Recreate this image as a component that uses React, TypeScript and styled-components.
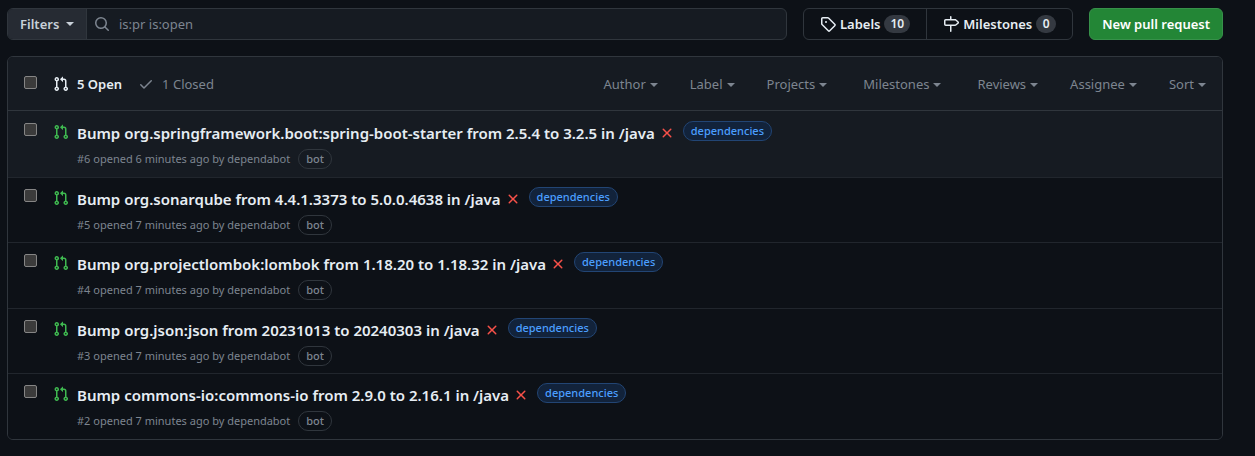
import React from "react";
import styled, { createGlobalStyle } from "styled-components";

const color = {
  canvas: "#0d1117",
  subtle: "#161b22",
  border: "#30363d",
  rowBorder: "#21262d",
  text: "#e6edf3",
  muted: "#7d8590",
  open: "#3fb950",
  danger: "#f85149",
};

const GlobalStyle = createGlobalStyle`
  *, *::before, *::after { box-sizing: border-box; }
  body {
    margin: 0;
    background: ${color.canvas};
    color: ${color.text};
    font-family: "Noto Sans", "Open Sans", sans-serif;
    font-size: 13px;
    line-height: 20px;
  }
  button, input { font: inherit; color: inherit; }
  a { color: inherit; text-decoration: none; }
`;

const Page = styled.main`
  padding: 8px 32px 16px 7px;
`;

const Toolbar = styled.div`
  display: flex;
  gap: 16px;
  margin-bottom: 16px;
`;

const SearchGroup = styled.form`
  display: flex;
  flex: 1;
  min-width: 0;
  height: 32px;
  border: 1px solid ${color.border};
  border-radius: 6px;
  background: ${color.subtle};
  overflow: hidden;
`;

const FilterButton = styled.button`
  display: flex;
  align-items: center;
  justify-content: space-between;
  width: 79px;
  padding: 0 12px;
  border: 0;
  border-right: 1px solid ${color.border};
  background: #262b33;
  color: #c9d1d9;
  font-weight: 600;
`;

const SearchField = styled.label`
  display: flex;
  flex: 1;
  align-items: center;
  gap: 9px;
  padding-left: 7px;
  color: ${color.muted};
`;

const SearchInput = styled.input`
  flex: 1;
  min-width: 0;
  padding: 0;
  border: 0;
  outline: 0;
  background: transparent;
`;

const Caret = styled.span`
  width: 0;
  height: 0;
  border: 4px solid transparent;
  border-top-color: currentColor;
  border-bottom-width: 0;
`;

const LinkGroup = styled.nav`
  display: flex;
  height: 32px;
  border: 1px solid ${color.border};
  border-radius: 6px;
`;

const GroupLink = styled.a`
  display: flex;
  align-items: center;
  gap: 4px;
  padding: 0 16px;
  font-weight: 600;

  & + & { border-left: 1px solid ${color.border}; }
`;

const Counter = styled.span`
  min-width: 20px;
  padding: 0 6px;
  border-radius: 10px;
  background: #343941;
  font-size: 12px;
  line-height: 18px;
  text-align: center;
`;

const PrimaryButton = styled.button`
  height: 32px;
  padding: 0 12px;
  border: 1px solid #37914a;
  border-radius: 6px;
  background: #238636;
  color: #fff;
  font-weight: 600;
  white-space: nowrap;
`;

const Panel = styled.section`
  border: 1px solid ${color.border};
  border-radius: 6px;
  overflow: hidden;
`;

const PanelHeader = styled.header`
  display: flex;
  align-items: center;
  height: 54px;
  padding: 0 16px;
  border-bottom: 1px solid ${color.border};
  background: ${color.subtle};
`;

const Checkbox = styled.input`
  appearance: none;
  flex: none;
  width: 13px;
  height: 13px;
  margin: 0 16px 2px 0;
  border: 1px solid #858585;
  border-radius: 2px;
  background: #3b3b3b;
`;

const StateLink = styled.a<{ $active?: boolean }>`
  display: flex;
  align-items: center;
  gap: 8px;
  margin-right: 16px;
  color: ${(p) => (p.$active ? color.text : color.muted)};
  font-weight: ${(p) => (p.$active ? 600 : 400)};
`;

const MenuBar = styled.div`
  display: flex;
  gap: 32px;
  margin-left: auto;
`;

const MenuButton = styled.button<{ $spaced?: boolean }>`
  display: flex;
  align-items: center;
  gap: 4px;
  margin: 0 ${(p) => (p.$spaced ? 4 : 0)}px;
  padding: 0;
  border: 0;
  background: none;
  color: ${color.muted};

  ${Caret} { margin-top: 3px; }
`;

const List = styled.ul`
  display: grid;
  grid-auto-rows: 1fr;
  min-height: 328px;
  margin: 0;
  padding: 0;
  list-style: none;
`;

const Row = styled.li<{ $highlighted?: boolean }>`
  display: flex;
  align-items: flex-start;
  padding: 11px 16px 0;
  border-top: 1px solid ${color.rowBorder};
  background: ${(p) => (p.$highlighted ? color.subtle : color.canvas)};

  &:first-child { border-top-color: transparent; }
`;

const StateIcon = styled.span`
  display: flex;
  padding-top: 1px;
`;

const RowBody = styled.div`
  margin-left: 8px;
`;

const TitleLine = styled.div`
  display: flex;
  align-items: center;
`;

const Title = styled.a`
  margin-right: 4px;
  font-size: 15px;
  font-weight: 600;
  line-height: 20px;
`;

const Label = styled.a`
  margin: -4px 0 0 8px;
  padding: 0 7px;
  border: 1px solid #224574;
  border-radius: 10px;
  background: #12233b;
  color: #4b9fff;
  font-size: 11px;
  font-weight: 500;
  line-height: 18px;
`;

const Meta = styled.div`
  display: flex;
  align-items: center;
  gap: 8px;
  margin-top: 6px;
  color: ${color.muted};
  font-size: 11px;
  line-height: 18px;
`;

const BotTag = styled.span`
  padding: 0 7px;
  border: 1px solid ${color.border};
  border-radius: 10px;
  font-weight: 500;
`;

const Svg = styled.svg<{ $tone?: string }>`
  flex: none;
  fill: ${(p) => p.$tone ?? "currentColor"};
`;

const icons = {
  pull: "M1.5 3.25a2.25 2.25 0 1 1 3 2.122v5.256a2.251 2.251 0 1 1-1.5 0V5.372A2.25 2.25 0 0 1 1.5 3.25Zm5.677-.177L9.573.677A.25.25 0 0 1 10 .854V2.5h1A2.5 2.5 0 0 1 13.5 5v5.628a2.251 2.251 0 1 1-1.5 0V5a1 1 0 0 0-1-1h-1v1.646a.25.25 0 0 1-.427.177L7.177 3.427a.25.25 0 0 1 0-.354ZM3.75 2.5a.75.75 0 1 0 0 1.5.75.75 0 0 0 0-1.5Zm0 9.5a.75.75 0 1 0 0 1.5.75.75 0 0 0 0-1.5Zm8.25.75a.75.75 0 1 0 1.5 0 .75.75 0 0 0-1.5 0Z",
  check: "M13.78 4.22a.75.75 0 0 1 0 1.06l-7.25 7.25a.75.75 0 0 1-1.06 0L2.22 9.28a.751.751 0 0 1 .018-1.042.751.751 0 0 1 1.042-.018L6 10.94l6.72-6.72a.75.75 0 0 1 1.06 0Z",
  cross: "M3.72 3.72a.75.75 0 0 1 1.06 0L8 6.94l3.22-3.22a.749.749 0 0 1 1.275.326.749.749 0 0 1-.215.734L9.06 8l3.22 3.22a.749.749 0 0 1-.326 1.275.749.749 0 0 1-.734-.215L8 9.06l-3.22 3.22a.751.751 0 0 1-1.042-.018.751.751 0 0 1-.018-1.042L6.94 8 3.72 4.78a.75.75 0 0 1 0-1.06Z",
  search: "M10.68 11.74a6 6 0 0 1-7.922-8.982 6 6 0 0 1 8.982 7.922l3.04 3.04a.749.749 0 0 1-.326 1.275.749.749 0 0 1-.734-.215ZM11.5 7a4.499 4.499 0 1 0-8.997 0A4.499 4.499 0 0 0 11.5 7Z",
  tag: "M1 7.775V2.75C1 1.784 1.784 1 2.75 1h5.025c.464 0 .91.184 1.238.513l6.25 6.25a1.75 1.75 0 0 1 0 2.474l-5.026 5.026a1.75 1.75 0 0 1-2.474 0l-6.25-6.25A1.752 1.752 0 0 1 1 7.775Zm1.5 0c0 .066.026.13.073.177l6.25 6.25a.25.25 0 0 0 .354 0l5.025-5.025a.25.25 0 0 0 0-.354l-6.25-6.25a.25.25 0 0 0-.177-.073H2.75a.25.25 0 0 0-.25.25ZM6 5a1 1 0 1 1 0 2 1 1 0 0 1 0-2Z",
  milestone: "M7.75 0a.75.75 0 0 1 .75.75V3h3.634c.414 0 .814.147 1.13.414l2.07 1.75a1.75 1.75 0 0 1 0 2.672l-2.07 1.75a1.75 1.75 0 0 1-1.13.414H8.5v5.25a.75.75 0 0 1-1.5 0V10H2.75A1.75 1.75 0 0 1 1 8.25v-3.5C1 3.784 1.784 3 2.75 3H7V.75A.75.75 0 0 1 7.75 0Zm4.384 8.5a.25.25 0 0 0 .161-.06l2.07-1.75a.248.248 0 0 0 0-.38l-2.07-1.75a.25.25 0 0 0-.161-.06H2.75a.25.25 0 0 0-.25.25v3.5c0 .138.112.25.25.25h9.384Z",
};

function Icon({ name, tone }: { name: keyof typeof icons; tone?: string }) {
  return (
    <Svg $tone={tone} width="16" height="16" viewBox="0 0 16 16" aria-hidden="true">
      <path d={icons[name]} />
    </Svg>
  );
}

const menus = ["Author", "Label", "Projects", "Milestones", "Reviews", "Assignee", "Sort"];

const pulls = [
  { id: 6, age: 6, title: "Bump org.springframework.boot:spring-boot-starter from 2.5.4 to 3.2.5 in /java" },
  { id: 5, age: 7, title: "Bump org.sonarqube from 4.4.1.3373 to 5.0.0.4638 in /java" },
  { id: 4, age: 7, title: "Bump org.projectlombok:lombok from 1.18.20 to 1.18.32 in /java" },
  { id: 3, age: 7, title: "Bump org.json:json from 20231013 to 20240303 in /java" },
  { id: 2, age: 7, title: "Bump commons-io:commons-io from 2.9.0 to 2.16.1 in /java" },
];

export default function App() {
  return (
    <>
      <GlobalStyle />
      <Page>
        <Toolbar>
          <SearchGroup>
            <FilterButton type="button">
              Filters <Caret />
            </FilterButton>
            <SearchField>
              <Icon name="search" />
              <SearchInput type="text" defaultValue="is:pr is:open" aria-label="Search pull requests" />
            </SearchField>
          </SearchGroup>
          <LinkGroup>
            <GroupLink href="#labels">
              <Icon name="tag" /> Labels <Counter>10</Counter>
            </GroupLink>
            <GroupLink href="#milestones">
              <Icon name="milestone" /> Milestones <Counter>0</Counter>
            </GroupLink>
          </LinkGroup>
          <PrimaryButton type="button">New pull request</PrimaryButton>
        </Toolbar>
        <Panel>
          <PanelHeader>
            <Checkbox type="checkbox" aria-label="Select all pull requests" />
            <StateLink href="#open" $active>
              <Icon name="pull" /> 5 Open
            </StateLink>
            <StateLink href="#closed">
              <Icon name="check" /> 1 Closed
            </StateLink>
            <MenuBar>
              {menus.map((menu) => (
                <MenuButton type="button" key={menu} $spaced={menu === "Milestones"}>
                  {menu} <Caret />
                </MenuButton>
              ))}
            </MenuBar>
          </PanelHeader>
          <List>
            {pulls.map((pull, i) => (
              <Row key={pull.id} $highlighted={i === 0}>
                <Checkbox type="checkbox" aria-label={`Select #${pull.id}`} />
                <StateIcon>
                  <Icon name="pull" tone={color.open} />
                </StateIcon>
                <RowBody>
                  <TitleLine>
                    <Title href={`#pull-${pull.id}`}>{pull.title}</Title>
                    <Icon name="cross" tone={color.danger} />
                    <Label href="#dependencies">dependencies</Label>
                  </TitleLine>
                  <Meta>
                    <span>
                      #{pull.id} opened {pull.age} minutes ago by <a href="#dependabot">dependabot</a>
                    </span>
                    <BotTag>bot</BotTag>
                  </Meta>
                </RowBody>
              </Row>
            ))}
          </List>
        </Panel>
      </Page>
    </>
  );
}
